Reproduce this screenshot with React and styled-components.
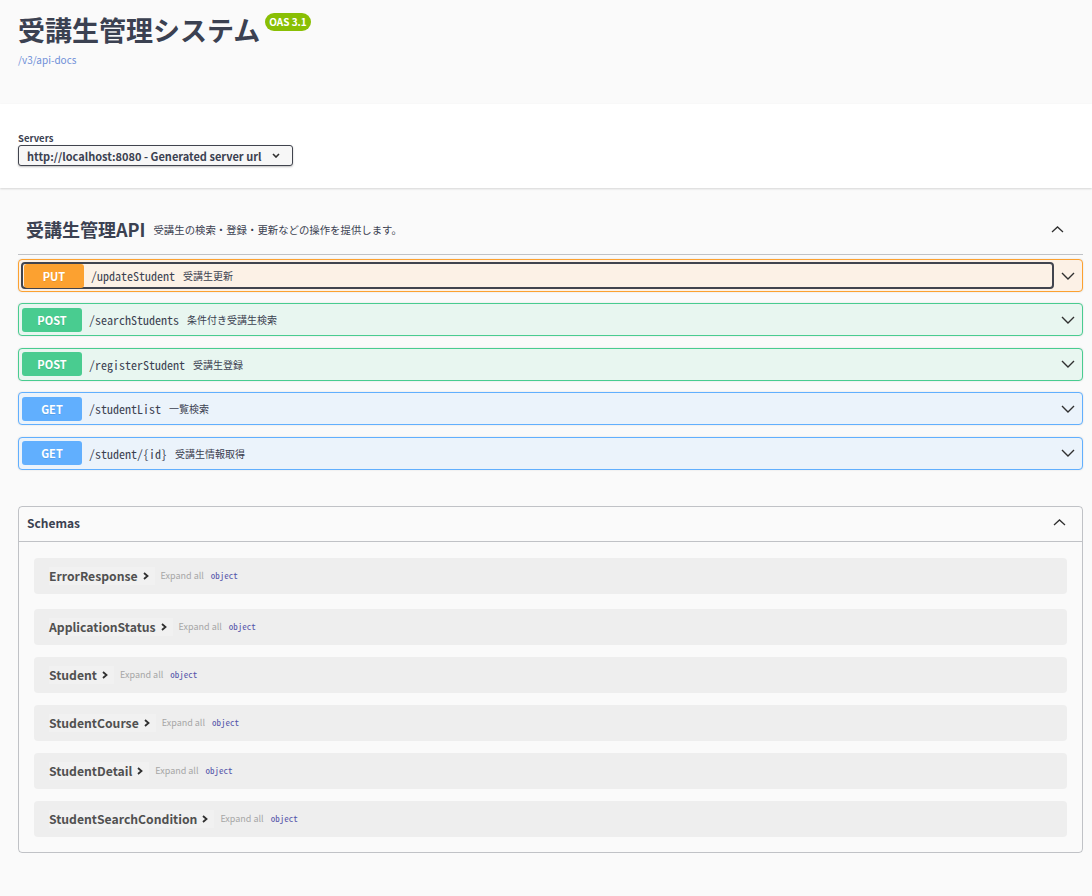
import React from 'react';
import styled, { createGlobalStyle, css } from 'styled-components';

const GlobalStyle = createGlobalStyle`
  body {
    margin: 0;
    background: #fafafa;
    font-family: "Noto Sans CJK JP", "Noto Sans", sans-serif;
    color: #3b4151;
  }
`;

const mono = `"Noto Sans Mono CJK JP", "DejaVu Sans Mono", monospace`;

const methods = {
  PUT: { main: '#fca130', bg: '#fcf1e6' },
  POST: { main: '#49cc90', bg: '#e8f6f0' },
  GET: { main: '#61affe', bg: '#ebf3fb' },
};

const Info = styled.div`
  height: 104px;
  box-sizing: border-box;
  padding: 12px 18px 0;
`;

const TitleRow = styled.div`
  display: flex;
  align-items: flex-start;
`;

const Title = styled.h1`
  margin: 0;
  font-size: 27px;
  line-height: 36px;
  font-weight: 700;
  color: #3b4151;
`;

const Badge = styled.span`
  margin: 1px 0 0 5px;
  height: 18px;
  padding: 0 4px;
  border-radius: 9px;
  background: #89bf04;
  color: #fff;
  font-size: 10px;
  font-weight: 700;
  line-height: 18px;
`;

const DocLink = styled.a`
  display: block;
  margin-top: 4px;
  font-size: 10px;
  color: #6f8fd8;
  text-decoration: none;
`;

const SchemeBar = styled.div`
  background: #fff;
  box-shadow: 0 1px 2px rgba(0, 0, 0, 0.15);
  padding: 28px 18px 22px;
`;

const Label = styled.div`
  font-size: 9.5px;
  font-weight: 700;
  line-height: 12px;
  margin-bottom: 1px;
`;

const Select = styled.div`
  width: 275px;
  height: 21px;
  box-sizing: border-box;
  border: 1px solid #41444e;
  border-radius: 3px;
  background: #f7f7f7;
  box-shadow: 0 1px 2px rgba(0, 0, 0, 0.25);
  display: flex;
  align-items: center;
  justify-content: space-between;
  padding: 0 12px 0 8px;
  font-size: 11px;
  font-weight: 700;
`;

const Wrapper = styled.div`
  padding: 16px 9px 0 18px;
`;

const TagHeader = styled.div`
  height: 50px;
  display: flex;
  align-items: center;
  padding: 0 19px 0 8px;
  border-bottom: 1px solid rgba(59, 65, 81, 0.3);
  margin-bottom: 4px;
`;

const TagTitle = styled.span`
  font-size: 18px;
  font-weight: 700;
`;

const TagDesc = styled.span`
  font-size: 10.4px;
  margin-left: 8px;
  flex: 1;
`;

const OpList = styled.div`
  display: flex;
  flex-direction: column;
  gap: 11.4px;
`;

const OpBlock = styled.div`
  height: 33px;
  box-sizing: border-box;
  display: flex;
  border: 1px solid ${(p) => methods[p.$method].main};
  background: ${(p) => methods[p.$method].bg};
  border-radius: 4px;
  box-shadow: 0 0 2px rgba(0, 0, 0, 0.12);
`;

const Summary = styled.div`
  flex: 1;
  display: flex;
  align-items: center;
  padding: 3px;
  ${(p) =>
    p.$focused &&
    css`
      margin: 2px 0 2px 2px;
      padding: 1px;
      border: 2px solid #41444e;
      border-radius: 4px;
    `}
`;

const MethodTag = styled.span`
  width: 60px;
  height: 24px;
  border-radius: 3px;
  background: ${(p) => methods[p.$method].main};
  color: #fff;
  font-size: 11px;
  font-weight: 700;
  display: flex;
  align-items: center;
  justify-content: center;
  text-shadow: 0 1px 0 rgba(0, 0, 0, 0.1);
`;

const Path = styled.span`
  font-family: ${mono};
  font-size: 12px;
  font-weight: 500;
  margin-left: 7px;
  color: #3b4151;
`;

const OpDesc = styled.span`
  font-size: 10px;
  margin-left: 8px;
`;

const ArrowButton = styled.div`
  width: 28px;
  display: flex;
  align-items: center;
  justify-content: center;
`;

const Models = styled.section`
  margin-top: 36px;
  border: 1px solid rgba(59, 65, 81, 0.3);
  border-radius: 4px;
`;

const ModelsHeader = styled.div`
  height: 35px;
  display: flex;
  align-items: center;
  justify-content: space-between;
  padding: 0 16px 2px 8px;
  box-sizing: border-box;
  border-bottom: 1px solid rgba(59, 65, 81, 0.3);
  font-size: 12px;
  font-weight: 700;
`;

const ModelList = styled.div`
  display: flex;
  flex-direction: column;
  gap: 12px;
  padding: 16px 15px 15px;
  & > div:first-child {
    margin-bottom: 3px;
  }
`;

const ModelBox = styled.div`
  height: 36px;
  border-radius: 4px;
  background: #eeeeee;
  display: flex;
  align-items: center;
  padding-left: 15px;
`;

const ModelName = styled.span`
  display: flex;
  align-items: center;
  gap: 5px;
  font-size: 12.2px;
  font-weight: 700;
  color: #505050;
  background: rgba(255, 255, 255, 0.2);
  padding-right: 6px;
`;

const ExpandAll = styled.span`
  font-size: 9px;
  color: #a6a6a6;
  margin-left: 6px;
`;

const TypeName = styled.span`
  font-family: ${mono};
  font-size: 9px;
  color: #55a;
  margin-left: 7px;
`;

const Chevron = ({ up, w = 14, h = 8, sw = 1.4 }) => (
  <svg width={w} height={h} viewBox={`0 0 ${w} ${h}`}>
    <polyline
      points={up ? `1,${h - 1} ${w / 2},1 ${w - 1},${h - 1}` : `1,1 ${w / 2},${h - 1} ${w - 1},1`}
      fill="none"
      stroke="#303030"
      strokeWidth={sw}
    />
  </svg>
);

const SmallArrow = () => (
  <svg width="6" height="8" viewBox="0 0 6 8">
    <polyline points="1,1 4.5,4 1,7" fill="none" stroke="#303030" strokeWidth="1.8" />
  </svg>
);

const ops = [
  { method: 'PUT', path: '/updateStudent', desc: '受講生更新', focused: true },
  { method: 'POST', path: '/searchStudents', desc: '条件付き受講生検索' },
  { method: 'POST', path: '/registerStudent', desc: '受講生登録' },
  { method: 'GET', path: '/studentList', desc: '一覧検索' },
  { method: 'GET', path: '/student/{id}', desc: '受講生情報取得' },
];

const schemas = [
  'ErrorResponse',
  'ApplicationStatus',
  'Student',
  'StudentCourse',
  'StudentDetail',
  'StudentSearchCondition',
];

export default function App() {
  return (
    <>
      <GlobalStyle />
      <Info>
        <TitleRow>
          <Title>受講生管理システム</Title>
          <Badge>OAS 3.1</Badge>
        </TitleRow>
        <DocLink href="#">/v3/api-docs</DocLink>
      </Info>
      <SchemeBar>
        <Label>Servers</Label>
        <Select>
          <span>http://localhost:8080 - Generated server url</span>
          <Chevron w={8} h={5} sw={1.6} />
        </Select>
      </SchemeBar>
      <Wrapper>
        <TagHeader>
          <TagTitle>受講生管理API</TagTitle>
          <TagDesc>受講生の検索・登録・更新などの操作を提供します。</TagDesc>
          <Chevron up w={13} h={7} sw={1.3} />
        </TagHeader>
        <OpList>
          {ops.map((op) => (
            <OpBlock key={op.path} $method={op.method}>
              <Summary $focused={op.focused}>
                <MethodTag $method={op.method}>{op.method}</MethodTag>
                <Path>{op.path}</Path>
                <OpDesc>{op.desc}</OpDesc>
              </Summary>
              <ArrowButton>
                <Chevron w={14} h={8} sw={1.4} />
              </ArrowButton>
            </OpBlock>
          ))}
        </OpList>
        <Models>
          <ModelsHeader>
            <span>Schemas</span>
            <Chevron up w={13} h={7} sw={1.3} />
          </ModelsHeader>
          <ModelList>
            {schemas.map((name) => (
              <ModelBox key={name}>
                <ModelName>
                  {name}
                  <SmallArrow />
                </ModelName>
                <ExpandAll>Expand all</ExpandAll>
                <TypeName>object</TypeName>
              </ModelBox>
            ))}
          </ModelList>
        </Models>
      </Wrapper>
    </>
  );
}
